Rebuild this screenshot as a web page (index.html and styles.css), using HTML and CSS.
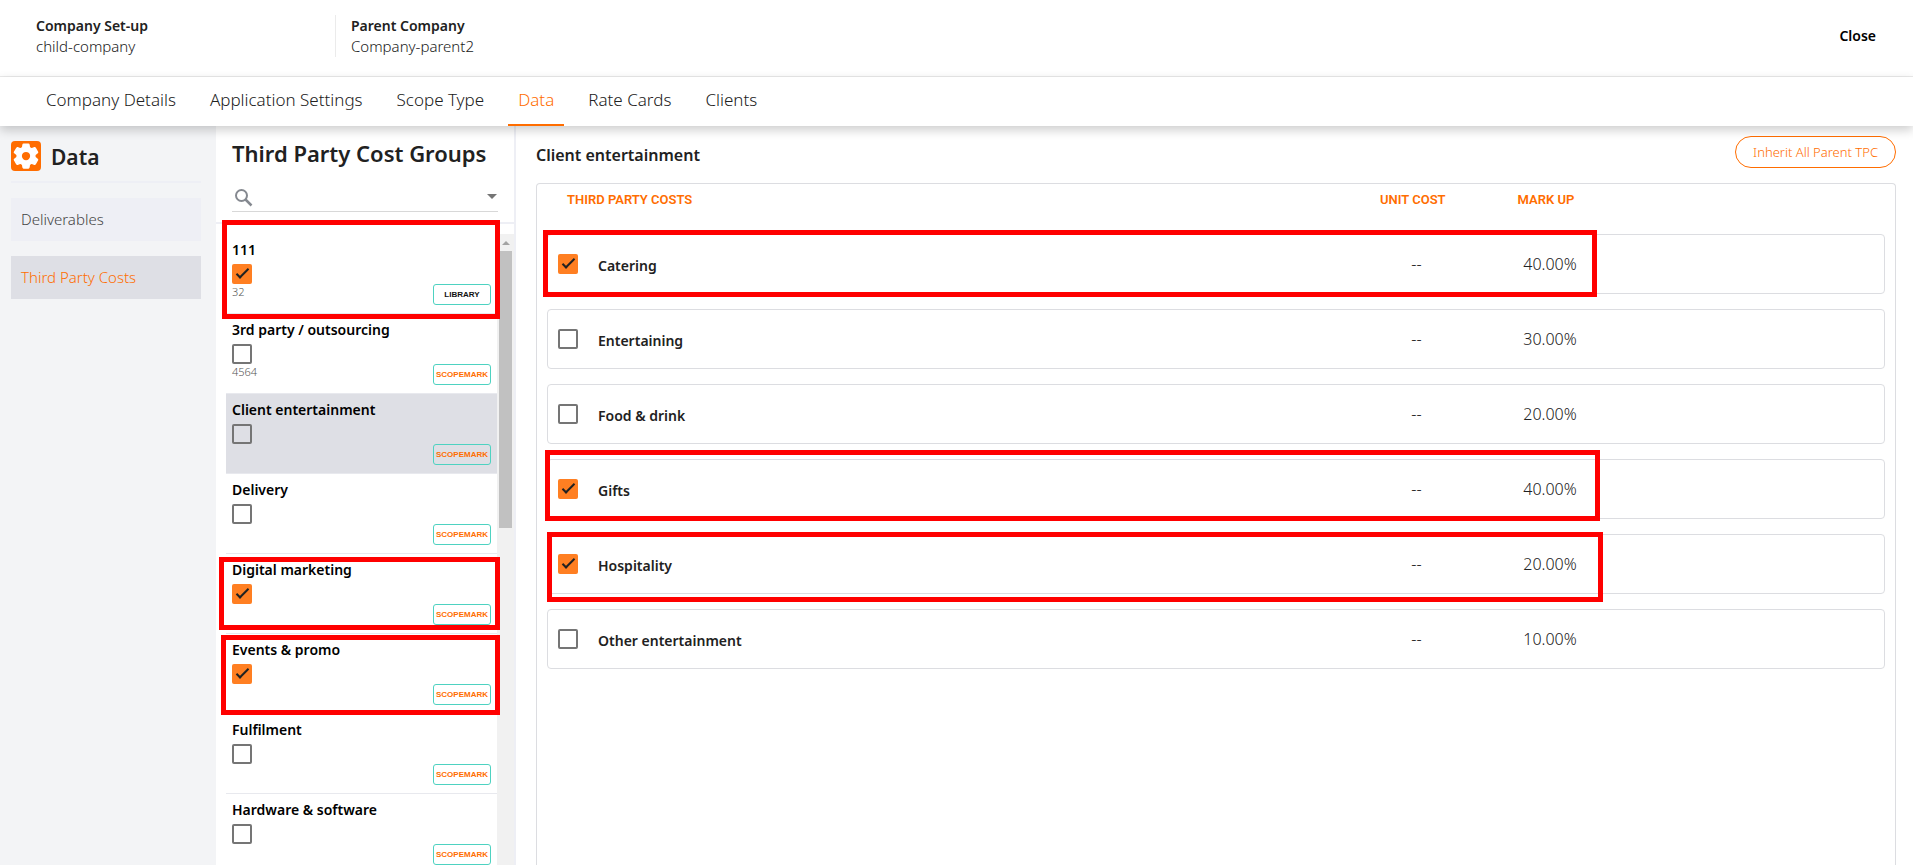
FILE: index.html
```html
<!DOCTYPE html>
<html lang="en">
<head>
    <meta charset="UTF-8">
    <meta name="viewport" content="width=device-width, initial-scale=1.0">
    <title>Company Set-up</title>
    <link rel="stylesheet" href="styles.css">
</head>
<body>
    <header class="top-bar">
        <div class="company">
            <strong>Company Set-up</strong>
            <span>child-company</span>
        </div>
        <div class="company parent">
            <strong>Parent Company</strong>
            <span>Company-parent2</span>
        </div>
        <button class="close-button" type="button">Close</button>
    </header>

    <nav class="tabs">
        <a href="#">Company Details</a>
        <a href="#">Application Settings</a>
        <a href="#">Scope Type</a>
        <a href="#" class="active">Data</a>
        <a href="#">Rate Cards</a>
        <a href="#">Clients</a>
    </nav>

    <div class="layout">
        <aside class="sidebar">
            <div class="sidebar-title">
                <span class="gear">
                    <svg viewBox="0 0 24 24" width="30" height="30"><path fill="#fff" stroke="#fff" d="M19.14 12.94c.04-.3.06-.61.06-.94 0-.32-.02-.64-.07-.94l2.03-1.58c.18-.14.23-.41.12-.61l-1.92-3.32c-.12-.22-.37-.29-.59-.22l-2.39.96c-.5-.38-1.03-.7-1.62-.94l-.36-2.54c-.04-.24-.24-.41-.48-.41h-3.84c-.24 0-.43.17-.47.41l-.36 2.54c-.59.24-1.13.57-1.62.94l-2.39-.96c-.22-.08-.47 0-.59.22L2.74 8.87c-.12.21-.08.47.12.61l2.03 1.58c-.05.3-.09.63-.09.94s.02.64.07.94l-2.03 1.58c-.18.14-.23.41-.12.61l1.92 3.32c.12.22.37.29.59.22l2.39-.96c.5.38 1.03.7 1.62.94l.36 2.54c.05.24.24.41.48.41h3.84c.24 0 .44-.17.47-.41l.36-2.54c.59-.24 1.13-.56 1.62-.94l2.39.96c.22.08.47 0 .59-.22l1.92-3.32c.12-.22.07-.47-.12-.61l-2.01-1.58z"/><circle cx="12" cy="12" r="3.300" fill="#ff6d00"/></svg>
                </span>
                <h2>Data</h2>
            </div>
            <a href="#" class="side-link">Deliverables</a>
            <a href="#" class="side-link active">Third Party Costs</a>
        </aside>

        <section class="groups">
            <div class="groups-head">
                <h1>Third Party Cost Groups</h1>
                <div class="search">
                    <svg viewBox="0 0 18 18" width="18" height="18"><circle cx="6.500" cy="6.500" r="5.500" fill="none" stroke="#858990" stroke-width="2"/><path d="M10.500 10.500l6 6" stroke="#858990" stroke-width="2.500"/></svg>
                    <input type="text" aria-label="Search groups">
                    <span class="caret"></span>
                </div>
            </div>
            <div class="list-wrap">
                <div class="group-list">
                    <div class="group">
                        <label for="g1">111</label>
                        <input type="checkbox" id="g1" checked>
                        <small>32</small>
                        <span class="badge library">LIBRARY</span>
                        <div class="mark mark-library"></div>
                    </div>
                    <div class="group">
                        <label for="g2">3rd party / outsourcing</label>
                        <input type="checkbox" id="g2">
                        <small>4564</small>
                        <span class="badge">SCOPEMARK</span>
                    </div>
                    <div class="group selected">
                        <label for="g3">Client entertainment</label>
                        <input type="checkbox" id="g3">
                        <span class="badge">SCOPEMARK</span>
                    </div>
                    <div class="group">
                        <label for="g4">Delivery</label>
                        <input type="checkbox" id="g4">
                        <span class="badge">SCOPEMARK</span>
                    </div>
                    <div class="group">
                        <label for="g5">Digital marketing</label>
                        <input type="checkbox" id="g5" checked>
                        <span class="badge">SCOPEMARK</span>
                        <div class="mark mark-digital"></div>
                    </div>
                    <div class="group">
                        <label for="g6">Events &amp; promo</label>
                        <input type="checkbox" id="g6" checked>
                        <span class="badge">SCOPEMARK</span>
                        <div class="mark mark-events"></div>
                    </div>
                    <div class="group">
                        <label for="g7">Fulfilment</label>
                        <input type="checkbox" id="g7">
                        <span class="badge">SCOPEMARK</span>
                    </div>
                    <div class="group">
                        <label for="g8">Hardware &amp; software</label>
                        <input type="checkbox" id="g8">
                        <span class="badge">SCOPEMARK</span>
                    </div>
                </div>
                <div class="scrollbar"><span class="arrow"></span><span class="thumb"></span></div>
            </div>
        </section>

        <main class="costs">
            <div class="costs-head">
                <h3>Client entertainment</h3>
                <button class="inherit-button" type="button">Inherit All Parent TPC</button>
            </div>
            <div class="panel">
                <table>
                    <thead>
                        <tr>
                            <th class="name">THIRD PARTY COSTS</th>
                            <th>UNIT COST</th>
                            <th>MARK UP</th>
                        </tr>
                    </thead>
                    <tbody>
                        <tr>
                            <td class="name"><input type="checkbox" id="c1" checked><label for="c1">Catering</label></td>
                            <td>--</td>
                            <td>40.00%<div class="mark mark-catering"></div></td>
                        </tr>
                        <tr>
                            <td class="name"><input type="checkbox" id="c2"><label for="c2">Entertaining</label></td>
                            <td>--</td>
                            <td>30.00%</td>
                        </tr>
                        <tr>
                            <td class="name"><input type="checkbox" id="c3"><label for="c3">Food &amp; drink</label></td>
                            <td>--</td>
                            <td>20.00%</td>
                        </tr>
                        <tr>
                            <td class="name"><input type="checkbox" id="c4" checked><label for="c4">Gifts</label></td>
                            <td>--</td>
                            <td>40.00%<div class="mark mark-gifts"></div></td>
                        </tr>
                        <tr>
                            <td class="name"><input type="checkbox" id="c5" checked><label for="c5">Hospitality</label></td>
                            <td>--</td>
                            <td>20.00%<div class="mark mark-hospitality"></div></td>
                        </tr>
                        <tr>
                            <td class="name"><input type="checkbox" id="c6"><label for="c6">Other entertainment</label></td>
                            <td>--</td>
                            <td>10.00%</td>
                        </tr>
                    </tbody>
                </table>
            </div>
        </main>
    </div>
</body>
</html>
```
FILE: styles.css
```css
* {
    box-sizing: border-box;
}

body {
    margin: 0;
    height: 100vh;
    display: flex;
    flex-direction: column;
    overflow: hidden;
    font-family: "Noto Sans", sans-serif;
    font-size: 14px;
    font-weight: 300;
    color: #212121;
    background: #fff;
}

h1, h2, h3 {
    margin: 0;
    font-weight: 600;
}

a {
    color: inherit;
    text-decoration: none;
}

button {
    font-family: inherit;
    background: none;
    border: 0;
    cursor: pointer;
}

.top-bar {
    flex: none;
    display: flex;
    align-items: center;
    height: 77px;
    padding: 0 37px 5px 36px;
    border-bottom: 1px solid #ebebeb;
}

.company {
    display: flex;
    flex-direction: column;
    width: 299px;
    line-height: 21px;
}

.company strong {
    font-weight: 600;
}

.company span {
    font-size: 15px;
}

.parent {
    padding-left: 15px;
    border-left: 1px solid #ebebeb;
}

.close-button {
    margin-left: auto;
    padding: 0;
    font-size: 14px;
    font-weight: 600;
    color: #000;
}

.tabs {
    flex: none;
    display: flex;
    gap: 14px;
    height: 49px;
    padding: 0 36px;
    position: relative;
    z-index: 1;
    background: #fff;
    box-shadow: 0 4px 10px rgba(0, 0, 0, 0.2);
}

.tabs a {
    padding: 0 10px 2px;
    font-size: 17px;
    line-height: 45px;
    border-bottom: 2px solid transparent;
}

.tabs a.active {
    color: #ff6d00;
    border-color: #ff6d00;
}

.layout {
    flex: 1;
    min-height: 0;
    display: flex;
}

/* Sidebar */
.sidebar {
    flex: none;
    width: 216px;
    padding: 15px 15px 0 11px;
    background: #f3f4f6;
}

.sidebar-title {
    display: flex;
    gap: 10px;
    height: 42px;
    border-bottom: 2px solid #eeeff5;
    margin-bottom: 15px;
}

.sidebar-title h2 {
    font-size: 21px;
    line-height: 32px;
}

.gear {
    width: 30px;
    height: 30px;
    background: #ff6d00;
    border-radius: 4px;
}

.gear svg {
    display: block;
}

.side-link {
    display: block;
    margin-bottom: 15px;
    padding: 0 10px;
    font-size: 15px;
    line-height: 43px;
    background: #eeeff5;
    color: #444;
}

.side-link.active {
    background: #dedfe5;
    color: #ff6d00;
}

/* Cost groups */
.groups {
    flex: none;
    width: 300px;
    display: flex;
    flex-direction: column;
    border-right: 2px solid #eeeff5;
}

.groups-head {
    flex: none;
    height: 98px;
    padding: 11px 16px 0;
    border-bottom: 2px solid #eeeff5;
}

.groups-head h1 {
    font-size: 22px;
    line-height: 32px;
    white-space: nowrap;
}

.search {
    display: flex;
    align-items: center;
    height: 32px;
    margin-top: 11px;
    padding: 4px 1px 0 3px;
    border-bottom: 1px solid #d8d8d8;
}

.search input {
    flex: 1;
    min-width: 0;
    border: 0;
    outline: 0;
    background: none;
}

.caret {
    margin-bottom: 3px;
    border: 5px solid transparent;
    border-top-color: #757575;
    border-bottom: 0;
}

.list-wrap {
    flex: 1;
    min-height: 0;
    display: flex;
    padding: 10px 0 0 10px;
}

.group-list {
    flex: 1;
}

.group {
    position: relative;
    display: flex;
    flex-direction: column;
    align-items: flex-start;
    height: 80px;
    padding: 6px 6px 0;
    border-bottom: 1px solid #e8e9ee;
}

.group.selected {
    background: #dedfe5;
}

.group label,
.name label {
    font-weight: 600;
}

.group label {
    line-height: 20px;
    margin-bottom: 4px;
    color: #000;
}

.group small {
    font-size: 11px;
    line-height: 16px;
    color: #555;
}

.badge {
    position: absolute;
    right: 6px;
    bottom: 8px;
    width: 58px;
    height: 21px;
    border: 1px solid #4ed2c1;
    border-radius: 3px;
    font-family: "Liberation Sans", sans-serif;
    font-size: 8px;
    font-weight: 700;
    line-height: 20px;
    text-align: center;
    color: #ff6d00;
}

.badge.library {
    color: #111;
}

input[type="checkbox"] {
    appearance: none;
    flex: none;
    width: 20px;
    height: 20px;
    margin: 0;
    border: 2px solid #757575;
    border-radius: 2px;
}

input[type="checkbox"]:checked {
    border: 0;
    background: #ff7f22;
}

input[type="checkbox"]:checked::before {
    content: "";
    display: block;
    width: 13px;
    height: 6px;
    margin: 5px 0 0 4px;
    border-left: 2px solid #212121;
    border-bottom: 2px solid #212121;
    box-sizing: border-box;
    transform: rotate(-45deg);
}

.scrollbar {
    display: flex;
    flex-direction: column;
    align-items: center;
    width: 17px;
    background: #f1f1f1;
}

.arrow {
    margin: 7px 0 6px;
    border: 4px solid transparent;
    border-bottom-color: #a3a3a3;
    border-top: 0;
}

.thumb {
    width: 13px;
    height: 277px;
    background: #c1c1c1;
}

/* Third party costs */
.costs {
    flex: 1;
    min-width: 0;
    display: flex;
    flex-direction: column;
    padding: 10px 17px 0 20px;
}

.costs-head {
    display: flex;
    justify-content: space-between;
    align-items: center;
    height: 32px;
    margin-bottom: 15px;
}

.costs-head h3 {
    padding-top: 6px;
    font-size: 16px;
}

.inherit-button {
    height: 32px;
    padding: 0 17px;
    border: 1px solid #ff6d00;
    border-radius: 16px;
    font-size: 13px;
    font-weight: 300;
    color: #ff6d00;
}

.panel {
    flex: 1;
    padding: 0 10px;
    border: 1px solid #dcdde1;
    border-bottom: 0;
    border-radius: 4px 4px 0 0;
}

table,
thead,
tbody {
    display: block;
}

tr {
    display: grid;
    grid-template-columns: 60% 10% 10% 20%;
    align-items: center;
}

thead tr {
    height: 30px;
    margin: 0 6px 20px 0;
}

th {
    padding: 0;
    font-family: Roboto, sans-serif;
    font-size: 13px;
    font-weight: 600;
    color: #ff6d00;
}

th.name {
    padding-left: 20px;
    text-align: left;
}

tbody tr {
    position: relative;
    height: 60px;
    margin-bottom: 15px;
    border: 1px solid #dcdde1;
    border-radius: 4px;
}

td {
    padding: 0;
    font-size: 16px;
    text-align: center;
}

td.name {
    display: flex;
    align-items: center;
    gap: 20px;
    padding-left: 10px;
    font-size: 14px;
}

td.name label {
    padding-top: 2px;
}

/* Red highlight frames drawn over the rows */
.mark {
    position: absolute;
    z-index: 2;
    border: 5px solid #f00;
    pointer-events: none;
}

.mark-library {
    inset: -14px -3px -6px -4px;
}

.mark-digital {
    inset: 3px -3px 3px -7px;
}

.mark-events {
    inset: 1px -3px -2px -5px;
}

.mark-catering {
    inset: -5px 287px -4px -5px;
}

.mark-gifts {
    inset: -10px 284px -3px -3px;
}

.mark-hospitality {
    inset: -3px 281px -9px -1px;
}
```
